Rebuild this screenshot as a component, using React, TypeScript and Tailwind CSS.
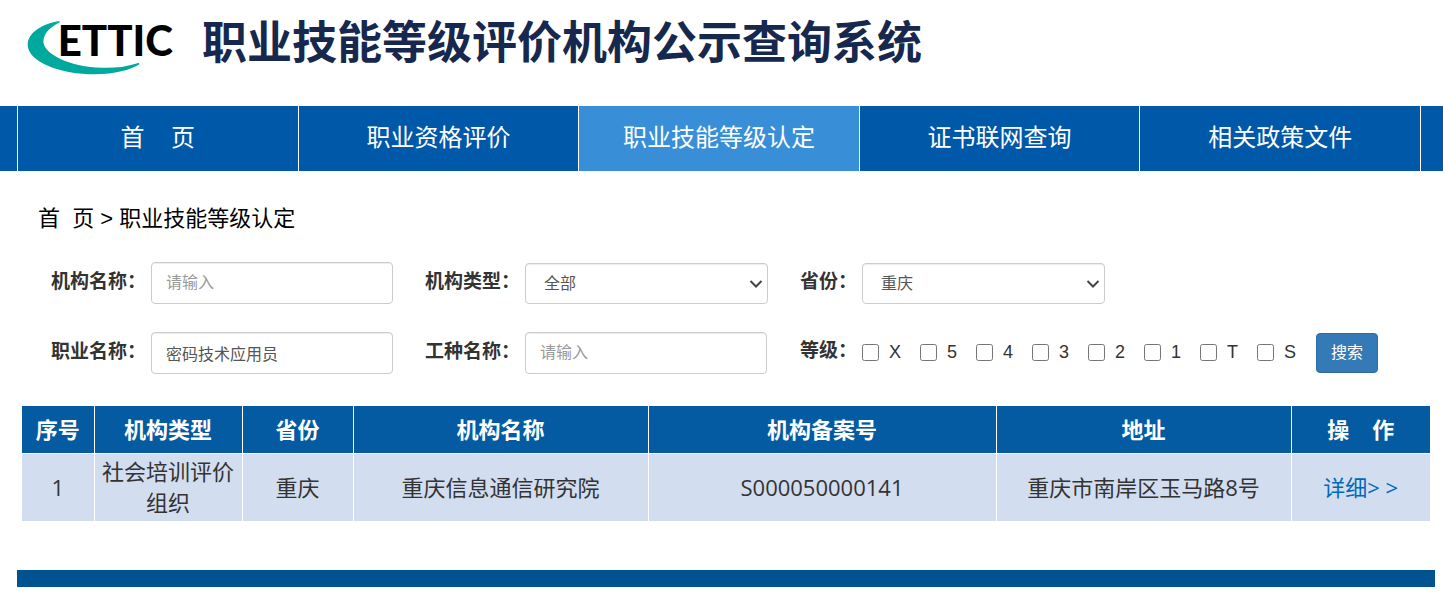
import type { ReactNode } from 'react';

const NAV = [
  { label: '首\u00a0\u00a0\u00a0\u00a0页', active: false },
  { label: '职业资格评价', active: false },
  { label: '职业技能等级认定', active: true },
  { label: '证书联网查询', active: false },
  { label: '相关政策文件', active: false },
];

const LEVELS = ['X', '5', '4', '3', '2', '1', 'T', 'S'];

const COLUMNS = [
  { title: '序号', width: 'w-[72px]' },
  { title: '机构类型', width: 'w-[148px]' },
  { title: '省份', width: 'w-[111px]' },
  { title: '机构名称', width: 'w-[21%]' },
  { title: '机构备案号', width: 'w-[348px]' },
  { title: '地址', width: 'w-[21%]' },
  { title: '操\u00a0\u00a0\u00a0\u00a0作', width: 'w-[139px]' },
];

const CONTROL =
  'rounded border border-[#ccc] bg-white text-base text-[#555] shadow-[inset_0_1px_1px_rgba(0,0,0,0.075)] placeholder:text-[#999]';

const INPUT = `${CONTROL} h-[42px] w-[242px] px-[14px]`;

function Logo() {
  return (
    <svg viewBox="0 -30 480 210" className="h-[70px] w-[160px] shrink-0" role="img" aria-label="CETTIC">
      <path
        d="M98 12 C48 20 3 45 2 83 C3 135 100 172 205 172 C262 171 312 158 335 143 C340 137 333 137 326 140 C295 150 262 153 225 152 C130 150 51 112 49 74 C50 48 72 29 98 16 Z"
        fill="#00a99d"
      />
      <text x="92" y="117" fontFamily="Lato, sans-serif" fontWeight="900" fontSize="126" fill="#000">
        ETTIC
      </text>
    </svg>
  );
}

function Field({ id, label, children, narrow }: { id: string; label: string; children: ReactNode; narrow?: boolean }) {
  return (
    <div className="flex items-center">
      <label htmlFor={id} className={`shrink-0 pb-[2px] text-[19px] font-bold whitespace-nowrap ${narrow ? 'w-[62px]' : 'w-[100px]'}`}>
        {label}
      </label>
      {children}
    </div>
  );
}

function Select({ id, value }: { id: string; value: string }) {
  return (
    <div className="relative">
      <select id={id} className={`${CONTROL} h-[41px] w-[243px] appearance-none px-[18px] pt-px`}>
        <option>{value}</option>
      </select>
      <svg
        viewBox="0 0 14 8"
        className="pointer-events-none absolute top-[17px] right-[5px] h-2 w-[14px]"
        fill="none"
        stroke="#444"
        strokeWidth="2"
      >
        <path d="M1.5 1 L7 6.5 L12.5 1" />
      </svg>
    </div>
  );
}

export default function App() {
  return (
    <div className="bg-white font-['Liberation_Sans','Noto_Sans_CJK_SC',sans-serif] text-[#333]">
      <header className="flex h-[106px] items-start gap-[15px] pt-[7px] pl-[27px]">
        <Logo />
        <h1 className="text-[45px] leading-[74px] font-bold whitespace-nowrap text-[#17284f]">职业技能等级评价机构公示查询系统</h1>
      </header>

      <nav className="bg-[#0058a8] pr-[22px] pl-[17px]">
        <ul className="flex border-r border-white">
          {NAV.map((item) => (
            <li key={item.label} className="flex-1 border-l border-white">
              <a
                href="#"
                className={`block pb-px text-center text-2xl leading-[64px] text-white ${item.active ? 'bg-[#388fd8]' : ''}`}
              >
                {item.label}
              </a>
            </li>
          ))}
        </ul>
      </nav>

      <main>
        <p className="pt-8 pl-[38px] text-[22px] leading-8 text-black">
          <a href="#">首&nbsp;&nbsp;页</a> &gt; <a href="#">职业技能等级认定</a>
        </p>

        <form className="grid grid-cols-[374fr_375fr_643fr] gap-y-7 pt-[27px] pl-[51px]">
          <Field id="org" label="机构名称：">
            <input id="org" type="text" placeholder="请输入" className={INPUT} />
          </Field>
          <Field id="type" label="机构类型：">
            <Select id="type" value="全部" />
          </Field>
          <Field id="province" label="省份：" narrow>
            <Select id="province" value="重庆" />
          </Field>
          <Field id="job" label="职业名称：">
            <input id="job" type="text" defaultValue="密码技术应用员" className={INPUT} />
          </Field>
          <Field id="work" label="工种名称：">
            <input id="work" type="text" placeholder="请输入" className={INPUT} />
          </Field>
          <fieldset className="flex items-center" aria-labelledby="level-label">
            <span id="level-label" className="w-[62px] shrink-0 pb-1 text-[19px] font-bold whitespace-nowrap">
              等级：
            </span>
            <div className="flex items-center gap-5">
              <div className="flex items-center gap-[19px] pb-[2px]">
                {LEVELS.map((level) => (
                  <label key={level} className="flex items-center gap-[10px] text-lg">
                    <input type="checkbox" className="size-[17px]" />
                    {level}
                  </label>
                ))}
              </div>
              <button type="button" className="h-10 rounded border border-[#2e6da4] bg-[#337ab7] px-[14px] text-base text-white">
                搜索
              </button>
            </div>
          </fieldset>
        </form>

        <div className="pt-8 pr-[13px] pl-[22px]">
          <table className="w-full table-fixed border-collapse text-center font-['Open_Sans','Noto_Sans_CJK_SC',sans-serif] text-[22px] leading-[31px]">
            <thead>
              <tr className="h-[47px] border-b border-white bg-[#045ba2] text-white">
                {COLUMNS.map((col) => (
                  <th key={col.title} className={`border-r border-white font-bold last:border-r-0 ${col.width}`}>
                    {col.title}
                  </th>
                ))}
              </tr>
            </thead>
            <tbody>
              <tr className="h-[68px] bg-[#d2ddef]">
                <td className="border-r border-white">1</td>
                <td className="border-r border-white px-[5px]">社会培训评价组织</td>
                <td className="border-r border-white">重庆</td>
                <td className="border-r border-white">重庆信息通信研究院</td>
                <td className="border-r border-white">S000050000141</td>
                <td className="border-r border-white">重庆市南岸区玉马路8号</td>
                <td>
                  <a href="#" className="text-[#0069b8]">
                    详细&gt; &gt;
                  </a>
                </td>
              </tr>
            </tbody>
          </table>
        </div>
      </main>

      <footer className="mt-[49px] mr-2 mb-[10px] ml-[17px] h-[17px] bg-[#005291]" />
    </div>
  );
}
